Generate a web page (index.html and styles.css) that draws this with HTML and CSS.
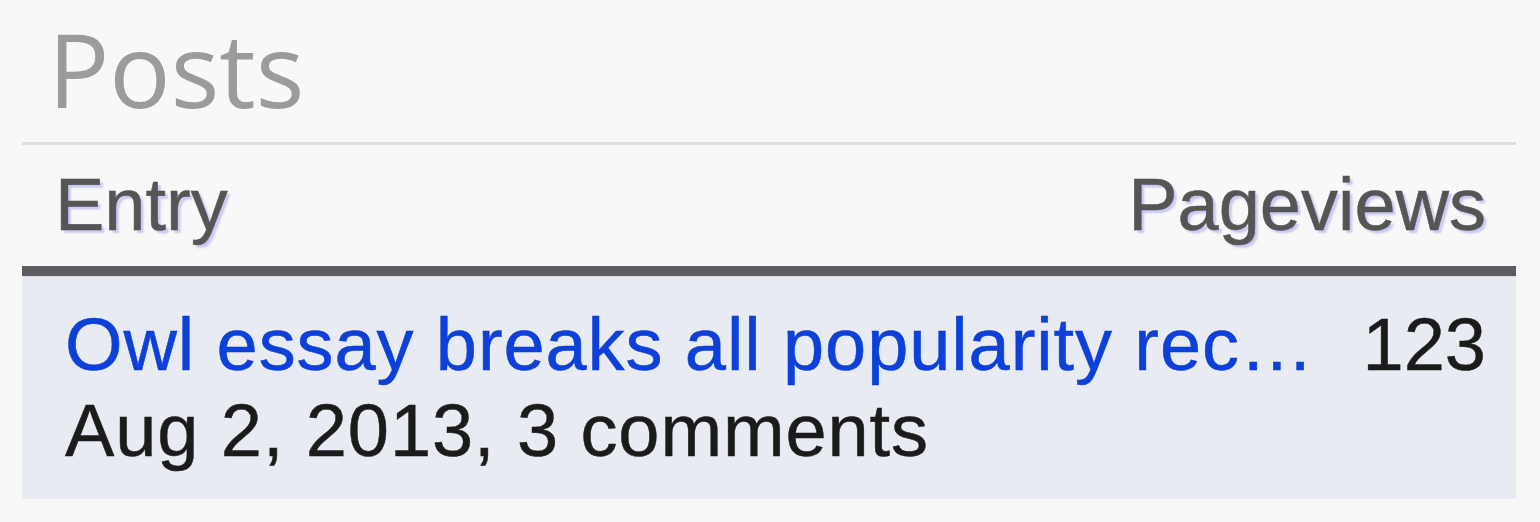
FILE: index.html
```html
<!DOCTYPE html>
<html lang="en">
<head>
    <meta charset="UTF-8">
    <title>Posts</title>
    <link rel="stylesheet" href="styles.css">
</head>
<body>

<div class="panel">
    <h1 class="panel-title">Posts</h1>

    <div class="posts-head">
        <span>Entry</span>
        <span>Pageviews</span>
    </div>

    <div class="post-row">
        <div class="post-info">
            <a class="post-link" href="#">Owl essay breaks all popularity rec…</a>
            <div class="post-meta">Aug 2, 2013, 3 comments</div>
        </div>
        <div class="post-views">123</div>
    </div>
</div>

</body>
</html>
```

FILE: styles.css
```css
body {
    margin: 0;
    padding: 0;
    background-color: #f8f8f8;
    font-family: 'Liberation Sans', Arial, sans-serif;
}

.panel {
    margin: 0 24px 0 22px;
}

.panel-title {
    margin: 0;
    padding: 4px 0 8px 26px;
    font-family: 'Open Sans', sans-serif;
    font-size: 102px;
    font-weight: 400;
    line-height: 130px;
    color: #9b9b9b;
    border-bottom: 3px solid #dddddd;
}

.posts-head {
    display: flex;
    justify-content: space-between;
    padding: 17px 30px 19px 33px;
    font-size: 74px;
    line-height: 85px;
    color: #555555;
    -webkit-text-stroke: 0.5px #555555;
    text-shadow: 3px 3px 2px #c9c9f3;
    border-bottom: 10px solid #5d5d61;
}

.post-row {
    display: flex;
    justify-content: space-between;
    align-items: flex-start;
    padding: 25px 30px 25px 43px;
    background-color: #e8ebf2;
    border-top: 1px solid #d8dbe2;
    font-size: 74px;
    line-height: 86px;
    letter-spacing: 0.9px;
    color: #1b1b1b;
    -webkit-text-stroke: 0.5px currentColor;
}

.post-link {
    color: #0c40d8;
    text-decoration: none;
}

.post-meta {
    color: #1b1b1b;
}

.post-views {
    color: #1b1b1b;
    letter-spacing: 0;
}
```
